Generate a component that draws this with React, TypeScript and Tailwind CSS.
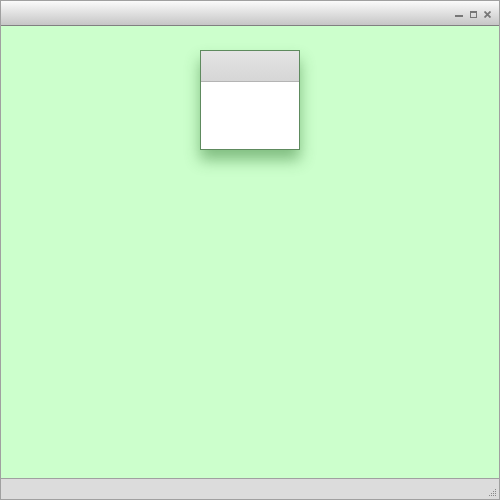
export default function App() {
  return (
    <div className="flex h-[500px] w-[500px] flex-col border border-[#a0a0a0] bg-[#ccffcc] font-['Liberation_Sans',sans-serif]">
      {/* title bar */}
      <div className="flex h-[25px] shrink-0 items-start justify-end gap-[7px] border-b border-[#808080] bg-gradient-to-b from-[#fbfbfb] to-[#c6c6c6] pr-[8px] pt-[10px]">
        <svg width="8" height="7" viewBox="0 0 8 7">
          <rect x="0" y="4" width="8" height="2" fill="#777" />
        </svg>
        <svg width="7" height="7" viewBox="0 0 7 7">
          <rect x="0.5" y="0.5" width="6" height="6" fill="none" stroke="#777" />
          <rect x="0" y="0" width="7" height="2" fill="#777" />
        </svg>
        <svg width="7" height="7" viewBox="0 0 7 7">
          <path d="M0.5 0.5L6.5 6.5M6.5 0.5L0.5 6.5" stroke="#777" strokeWidth="1.8" />
        </svg>
      </div>

      {/* desktop */}
      <div className="flex-1 pl-[199px] pt-[24px]">
        <div className="flex h-[100px] w-[100px] flex-col border border-[#5e8a5e] bg-white shadow-[0_10px_14px_rgba(40,110,40,0.45)]">
          <div className="h-[31px] border-b border-[#b4b4b4] bg-gradient-to-b from-[#e4e4e4] to-[#d6d6d6]" />
        </div>
      </div>

      {/* status bar */}
      <div className="flex h-[21px] shrink-0 items-end justify-end border-t border-[#a0a0a0] bg-[#dcdcdc] pb-[2px] pr-[2px]">
        <svg width="8" height="8" viewBox="0 0 8 8">
          <rect x="6" y="0" width="1" height="1" fill="#888" />
          <rect x="6" y="2" width="1" height="1" fill="#888" />
          <rect x="6" y="4" width="1" height="1" fill="#888" />
          <rect x="6" y="6" width="1" height="1" fill="#888" />
          <rect x="4" y="2" width="1" height="1" fill="#888" />
          <rect x="4" y="4" width="1" height="1" fill="#888" />
          <rect x="4" y="6" width="1" height="1" fill="#888" />
          <rect x="2" y="4" width="1" height="1" fill="#888" />
          <rect x="2" y="6" width="1" height="1" fill="#888" />
          <rect x="0" y="6" width="1" height="1" fill="#888" />
        </svg>
      </div>
    </div>
  );
}
